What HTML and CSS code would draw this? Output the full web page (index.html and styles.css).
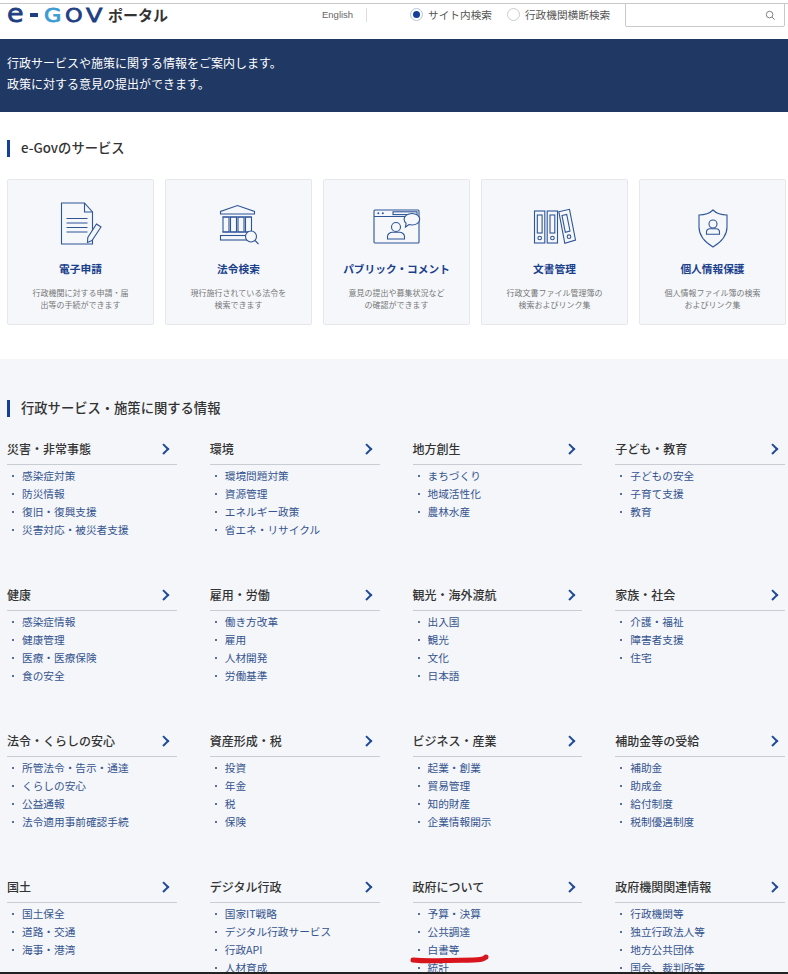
FILE: index.html
```html
<!DOCTYPE html>
<html lang="ja">
<head>
<meta charset="utf-8">
<title>e-Gov ポータル</title>
<link rel="stylesheet" href="styles.css">
</head>
<body>
<div class="page">
  <header class="header">
    <div class="logo"><span class="logo-e">e</span><span class="logo-dash"></span><span class="logo-g">G</span><span class="logo-o">O</span><span class="logo-v">V</span><span class="logo-jp">ポータル</span></div>
    <a class="lang">English</a>
    <div class="radios">
      <span class="radio on"></span><span class="radio-label">サイト内検索</span>
      <span class="radio"></span><span class="radio-label">行政機関横断検索</span>
    </div>
    <div class="search">
      <svg class="search-icon" viewBox="0 0 12 12"><circle cx="5" cy="5" r="3.6"/><path d="M7.7 7.7 10.5 10.5"/></svg>
    </div>
  </header>
  <div class="banner">
    <p>行政サービスや施策に関する情報をご案内します。</p>
    <p>政策に対する意見の提出ができます。</p>
  </div>
  <section class="services">
    <h2 class="title">e-Govのサービス</h2>
    <div class="cards">
      <a class="card">
        <svg class="icon" viewBox="0 0 48 48"><path d="M4.5 4h23l8 9v32h-31z"/><path d="M27.5 4v9h8"/><path d="M9.500 19.500h21M9.500 24h21M9.500 28.500h21M9.500 33h21"/><path class="fill" d="M39.500 25 44 28 35 41.500 30.500 43.500 30.800 38.500z"/></svg>
        <h3>電子申請</h3>
        <p>行政機関に対する申請・届<br>出等の手続ができます</p>
      </a>
      <a class="card">
        <svg class="icon" viewBox="0 0 48 48"><path d="M5.500 15v-2.500L22.500 6.500l17 6V15z"/><path d="M7.500 18h29M7.500 33h29"/><rect x="8" y="18" width="6" height="15"/><rect x="15.500" y="18" width="6" height="15"/><rect x="23" y="18" width="6" height="15"/><rect x="30.500" y="18" width="6" height="15"/><rect x="5.500" y="36.500" width="26" height="4.500"/><circle class="fill" cx="36" cy="37.500" r="5.500"/><path d="M40 41.500 43.500 45"/></svg>
        <h3>法令検索</h3>
        <p>現行施行されている法令を<br>検索できます</p>
      </a>
      <a class="card">
        <svg class="icon" viewBox="0 0 48 48"><rect x="1" y="11" width="45" height="33" rx="1"/><path d="M1 17.500h45"/><circle class="solid" cx="5.300" cy="14.300" r="1"/><circle class="solid" cx="9.800" cy="14.300" r="1"/><rect x="20" y="12.800" width="24" height="2.800"/><path class="fill" d="M39 14.500c4.300 0 7.700 2.500 7.700 5.800S43.300 26 39 26c-1 0-2 0-3-.4L32.500 28l.6-3.800c-1.300-1-2-2.400-2-3.900 0-3.300 3.500-5.800 7.900-5.800z"/><circle cx="23" cy="28" r="4.500"/><path d="M14.500 40v-2.500c0-2.500 2.500-4.200 5-4.200h7c2.500 0 5 1.700 5 4.200V40z"/></svg>
        <h3>パブリック・コメント</h3>
        <p>意見の提出や募集状況など<br>の確認ができます</p>
      </a>
      <a class="card">
        <svg class="icon" viewBox="0 0 48 48"><rect x="3.500" y="12" width="10.300" height="32"/><rect x="6.300" y="16" width="4.800" height="18"/><circle cx="8.700" cy="39" r="1.800"/><rect x="16.200" y="12" width="10.300" height="32"/><rect x="19" y="16" width="4.800" height="18"/><circle cx="21.400" cy="39" r="1.800"/><path d="M27.800 12.700 38.500 10.300 44.500 41 33.800 44.300z"/><path d="M31 16.500 35.700 15.500 39 32 34.300 33.300z"/><circle cx="38" cy="37.700" r="1.800"/></svg>
        <h3>文書管理</h3>
        <p>行政文書ファイル管理簿の<br>検索およびリンク集</p>
      </a>
      <a class="card">
        <svg class="icon" viewBox="0 0 48 48"><path d="M24 11c3 3 8.500 5 14 5v12c0 9-6.500 15.500-14 20C16.500 43.500 10 37 10 28V16c5.500 0 11-2 14-5z"/><circle cx="24" cy="25" r="4"/><path d="M17.500 35.200v-2c0-2 1.500-3.500 3.500-3.500h6c2 0 3.500 1.500 3.500 3.500v2z"/></svg>
        <h3>個人情報保護</h3>
        <p>個人情報ファイル簿の検索<br>およびリンク集</p>
      </a>
    </div>
  </section>
  <section class="info">
    <h2 class="title">行政サービス・施策に関する情報</h2>
    <div class="topics">
      <div class="topic"><div class="topic-head">災害・非常事態<i class="chev"></i></div><ul><li>感染症対策</li><li>防災情報</li><li>復旧・復興支援</li><li>災害対応・被災者支援</li></ul></div>
      <div class="topic"><div class="topic-head">環境<i class="chev"></i></div><ul><li>環境問題対策</li><li>資源管理</li><li>エネルギー政策</li><li>省エネ・リサイクル</li></ul></div>
      <div class="topic"><div class="topic-head">地方創生<i class="chev"></i></div><ul><li>まちづくり</li><li>地域活性化</li><li>農林水産</li></ul></div>
      <div class="topic"><div class="topic-head">子ども・教育<i class="chev"></i></div><ul><li>子どもの安全</li><li>子育て支援</li><li>教育</li></ul></div>
      <div class="topic"><div class="topic-head">健康<i class="chev"></i></div><ul><li>感染症情報</li><li>健康管理</li><li>医療・医療保険</li><li>食の安全</li></ul></div>
      <div class="topic"><div class="topic-head">雇用・労働<i class="chev"></i></div><ul><li>働き方改革</li><li>雇用</li><li>人材開発</li><li>労働基準</li></ul></div>
      <div class="topic"><div class="topic-head">観光・海外渡航<i class="chev"></i></div><ul><li>出入国</li><li>観光</li><li>文化</li><li>日本語</li></ul></div>
      <div class="topic"><div class="topic-head">家族・社会<i class="chev"></i></div><ul><li>介護・福祉</li><li>障害者支援</li><li>住宅</li></ul></div>
      <div class="topic"><div class="topic-head">法令・くらしの安心<i class="chev"></i></div><ul><li>所管法令・告示・通達</li><li>くらしの安心</li><li>公益通報</li><li>法令適用事前確認手続</li></ul></div>
      <div class="topic"><div class="topic-head">資産形成・税<i class="chev"></i></div><ul><li>投資</li><li>年金</li><li>税</li><li>保険</li></ul></div>
      <div class="topic"><div class="topic-head">ビジネス・産業<i class="chev"></i></div><ul><li>起業・創業</li><li>貿易管理</li><li>知的財産</li><li>企業情報開示</li></ul></div>
      <div class="topic"><div class="topic-head">補助金等の受給<i class="chev"></i></div><ul><li>補助金</li><li>助成金</li><li>給付制度</li><li>税制優遇制度</li></ul></div>
      <div class="topic"><div class="topic-head">国土<i class="chev"></i></div><ul><li>国土保全</li><li>道路・交通</li><li>海事・港湾</li></ul></div>
      <div class="topic"><div class="topic-head">デジタル行政<i class="chev"></i></div><ul><li>国家IT戦略</li><li>デジタル行政サービス</li><li>行政API</li><li>人材育成</li></ul></div>
      <div class="topic"><div class="topic-head">政府について<i class="chev"></i></div><ul><li>予算・決算</li><li>公共調達</li><li>白書等</li><li>統計</li></ul></div>
      <div class="topic"><div class="topic-head">政府機関関連情報<i class="chev"></i></div><ul><li>行政機関等</li><li>独立行政法人等</li><li>地方公共団体</li><li>国会、裁判所等</li></ul></div>
    </div>
  </section>
  <svg class="scribble" viewBox="0 0 80 12"><path d="M3 8C12 9 24 9 36 8.500S64 8.500 70 7.500 75 5 76 5"/></svg>
  <div class="edge"></div>
</div>
</body>
</html>
```

FILE: styles.css
```css
* { box-sizing: border-box; }
html, body { margin: 0; padding: 0; background: #fff; }
body { font-family: "Noto Sans CJK JP", "Noto Sans", sans-serif; color: #333; }
p, h2, h3, ul { margin: 0; padding: 0; }
.page { position: relative; width: 788px; height: 974px; overflow: hidden; }

.header { display: flex; align-items: center; height: 36px; margin-top: 3px; border-top: 1px solid #c9c9c9; padding-left: 7px; position: relative; }
.logo { display: flex; align-items: baseline; width: 315px; height: 24px; margin-top: -15px; font-family: "DejaVu Sans", sans-serif; font-size: 20px; line-height: 24px; color: #1f3f83; -webkit-text-stroke: 0.8px currentColor; }
.logo-e { font-size: 24px; width: 23px; display: block; transform: scaleX(1.12); transform-origin: left; }
.logo-dash { width: 8px; height: 3.5px; background: #1f3f83; margin: 11px 6px 0 0; align-self: flex-start; }
.logo-g { color: #3a9bd5; width: 21px; display: block; transform: scaleX(1.12); transform-origin: left; }
.logo-o { width: 21px; display: block; transform: scaleX(1.12); transform-origin: left; }
.logo-v { width: 22px; display: block; transform: scaleX(1.2); transform-origin: left; }
.logo-jp { font-family: "Noto Sans CJK JP", sans-serif; font-size: 15px; font-weight: 700; color: #333; width: 60px; -webkit-text-stroke: 0; position: relative; top: -1.5px; }
.lang { font-family: "Liberation Sans", sans-serif; font-size: 9.5px; color: #666; width: 45px; height: 14px; line-height: 14px; border-right: 1px solid #ddd; margin-top: -14px; }
.radios { display: flex; align-items: center; margin-left: 43px; margin-top: -14px; font-size: 10.67px; color: #555; }
.radio { width: 13px; height: 13px; border-radius: 50%; border: 1px solid #ccc; background: #fff; margin-right: 5px; position: relative; }
.radio.on { border-color: #b8c4de; }
.radio.on::after { content: ""; position: absolute; left: 2px; top: 2px; width: 7px; height: 7px; border-radius: 50%; background: #12409a; }
.radio-label { margin-right: 15px; line-height: 14px; }
.radio-label:last-child { margin-right: 0; }
.search { position: absolute; top: -1px; left: 625px; width: 160px; height: 24px; border: 1px solid #c9c9c9; border-radius: 0 0 2px 2px; background: #fff; }
.search-icon { position: absolute; right: 8px; top: 6px; width: 11px; height: 11px; fill: none; stroke: #777; stroke-width: 1; }

.banner { height: 73px; background: #203864; color: #fff; padding: 13px 7px 0; font-size: 12px; line-height: 21px; }

.title { font-size: 13.3px; line-height: 15px; padding-bottom: 2px; font-weight: 500; border-left: 3px solid #12409a; padding-left: 11px; color: #333; }
.services { padding: 28px 0 34px 7px; }
.cards { display: grid; grid-template-columns: repeat(5, 147px); column-gap: 11px; margin-top: 22px; }
.card { height: 146px; background: #f5f7fb; border: 1px solid #e6e8ed; border-radius: 2px; display: flex; flex-direction: column; align-items: center; padding-top: 19px; text-align: center; }
.icon { width: 48px; height: 48px; fill: none; stroke: #2f5597; stroke-width: 1.1; overflow: visible; }
.icon .fill { fill: #f5f7fb; }
.icon .solid { fill: #2f5597; stroke: none; }
.card h3 { font-size: 10.7px; line-height: 16px; font-weight: 700; color: #1a3f8c; margin-top: 14px; white-space: nowrap; }
.card p { font-size: 8px; line-height: 12px; color: #777; margin-top: 10px; white-space: nowrap; }

.info { background: #f4f6f9; height: 615px; padding: 41px 3px 0 7px; }
.topics { display: grid; grid-template-columns: repeat(4, 1fr); column-gap: 33px; grid-auto-rows: 146px; margin-top: 20px; }
.topic-head { height: 28px; display: flex; justify-content: space-between; align-items: center; padding: 0 0 5px 0; border-bottom: 1px solid #c9ccd3; font-size: 12px; font-weight: 500; color: #333; }
.chev { width: 7.5px; height: 7.5px; border-top: 2px solid #1f4a95; border-right: 2px solid #1f4a95; transform: rotate(45deg); margin: 2px 9px 0 0; }
.topic ul { list-style: none; margin-top: 2px; }
.topic li { position: relative; height: 18px; line-height: 18px; padding-left: 15px; font-size: 10.67px; color: #34548f; white-space: nowrap; }
.topic li::before { content: ""; position: absolute; left: 5px; top: 8px; width: 2px; height: 2px; background: #5a6f98; }

.scribble { position: absolute; left: 410px; top: 952px; width: 80px; height: 12px; fill: none; stroke: #d8141c; stroke-width: 5; stroke-linecap: round; }
.edge { position: absolute; left: 0; right: 0; bottom: 0; height: 2px; background: #222; }
```
